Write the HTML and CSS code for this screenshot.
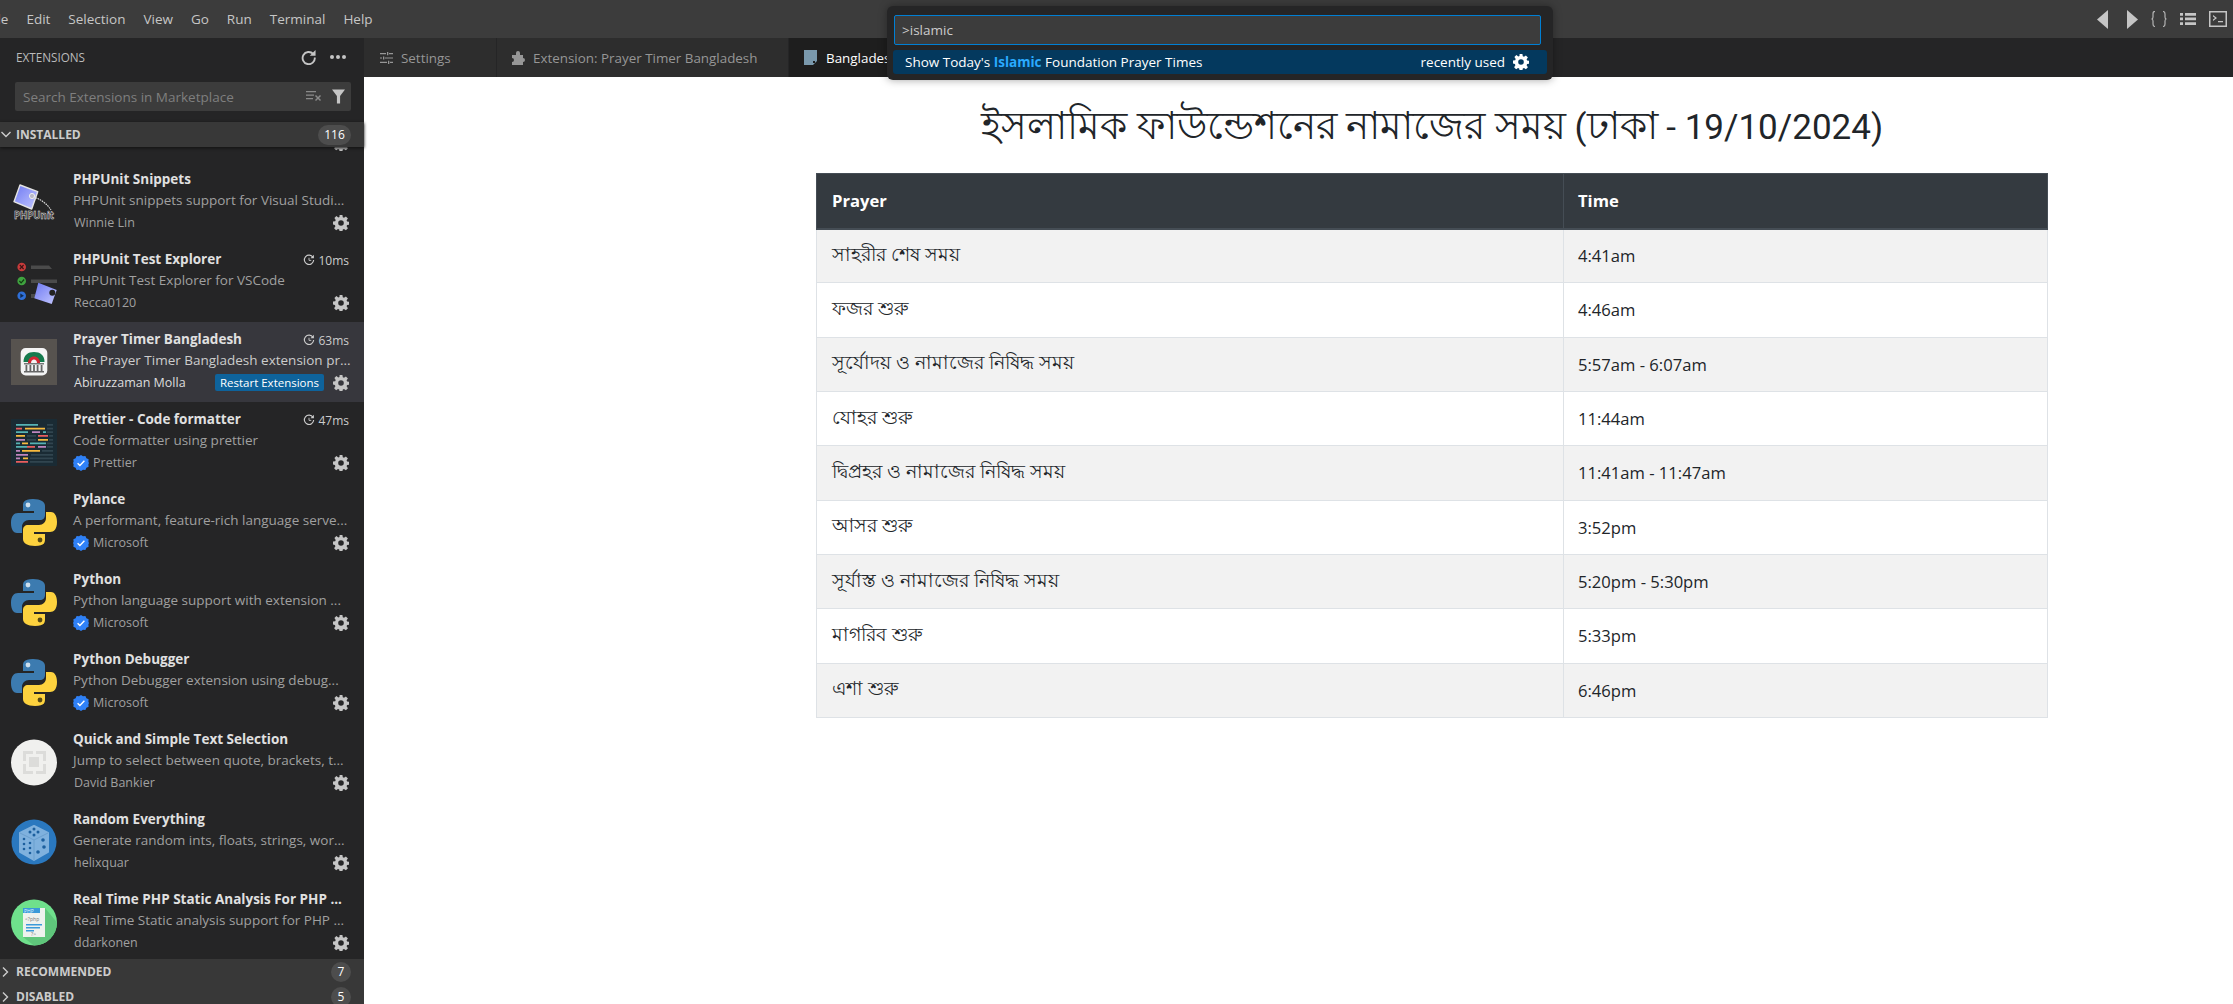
FILE: index.html
```html
<!DOCTYPE html>
<html lang="en">
<head>
    <meta charset="UTF-8">
    <title>Prayer Times</title>
    <link rel="stylesheet" href="styles.css">
</head>
<body>
    <svg class="svg-defs" width="0" height="0">
        <defs>
            <linearGradient id="tagFill" x1="0" y1="0" x2="1" y2="1">
                <stop offset="0" stop-color="#6d78f2"/>
                <stop offset="1" stop-color="#c4c8ff"/>
            </linearGradient>
            <symbol id="gear" viewBox="0 0 16 16">
                <path fill-rule="evenodd" d="M6.600 0h2.800l.4 2.200 1.200.5 1.900-1.300 2 2-1.300 1.900.5 1.200 2.200.4v2.800l-2.200.4-.5 1.200 1.300 1.900-2 2-1.900-1.300-1.200.5-.4 2.200H6.600l-.4-2.200-1.200-.5-1.900 1.300-2-2 1.300-1.900-.5-1.200L0 9.400V6.600l2.200-.4.5-1.200-1.300-1.900 2-2 1.900 1.300 1.200-.5zM8 5.200a2.800 2.800 0 1 0 0 5.600 2.800 2.800 0 0 0 0-5.600z"/>
            </symbol>
            <symbol id="badge" viewBox="0 0 16 16">
                <path fill="#2f81f7" d="M8 0l2 1.300 2.400-.2 1 2.200 2.200 1-.2 2.400L16 8l-.6 1.300.2 2.400-2.200 1-1 2.200-2.400-.2L8 16l-2-1.300-2.400.2-1-2.200-2.200-1 .2-2.400L0 8l.6-1.300-.2-2.400 2.200-1 1-2.200 2.400.2z"/>
                <path fill="none" stroke="#fff" stroke-width="1.400" d="M4.600 8.200l2.300 2.300 4.500-4.700"/>
            </symbol>
            <symbol id="clock" viewBox="0 0 16 16">
                <path fill="none" stroke="currentColor" stroke-width="1.500" d="M13.300 4.500A6.200 6.200 0 1 0 14.200 8"/>
                <path fill="currentColor" d="M14.500 1v4.500H10z"/>
                <path fill="none" stroke="currentColor" stroke-width="1.200" d="M8 5v3.500h3"/>
            </symbol>
            <symbol id="python" viewBox="0 0 46 47">
                <path fill="#3c7bb0" d="M22 0C12 0 12 4 12 7v5h11v2H7c-4 0-7 3-7 10s3 10 6 10h5v-6c0-4 3-7 7-7h11c3 0 5-2 5-5V7c0-4-4-7-12-7z"/>
                <circle cx="17" cy="6" r="2.400" fill="#cfe0ee"/>
                <path fill="#fdd23e" d="M24 47c10 0 10-4 10-7v-5H23v-2h16c4 0 7-3 7-10s-3-10-6-10h-5v6c0 4-3 7-7 7H17c-3 0-5 2-5 5v9c0 4 4 7 12 7z"/>
                <circle cx="29" cy="41" r="2.400" fill="#5a4a12"/>
            </symbol>
        </defs>
    </svg>

    <header class="titlebar">
        <nav class="menu">
            <span>File</span>
            <span>Edit</span>
            <span>Selection</span>
            <span>View</span>
            <span>Go</span>
            <span>Run</span>
            <span>Terminal</span>
            <span>Help</span>
        </nav>
        <div class="layout-icons">
            <svg class="nav-back" width="11" height="19" viewBox="0 0 11 19"><path d="M11 0v19L0 9.500z"/></svg>
            <svg class="nav-fwd" width="11" height="19" viewBox="0 0 11 19"><path d="M0 0v19l11-9.500z"/></svg>
            <svg class="braces" width="16" height="16" viewBox="0 0 16 16"><path d="M4 .5C2 .5 2 1.500 2 3v3c0 1-.5 2-1.500 2C1.500 8 2 9 2 10v3c0 1.500 0 2.500 2 2.500M12 .5c2 0 2 1 2 2.500v3c0 1 .5 2 1.500 2-1 0-1.500 1-1.500 2v3c0 1.500 0 2.500-2 2.500"/></svg>
            <svg width="16" height="12" viewBox="0 0 16 12"><path d="M0 0h3v2.700H0zM5 0h11v2.700H5zM0 4.600h3v2.700H0zM5 4.600h11v2.700H5zM0 9.300h3V12H0zM5 9.300h11V12H5z"/></svg>
            <svg width="18" height="16" viewBox="0 0 18 16"><path fill-rule="evenodd" d="M0 0h18v16H0zM1.500 1.500v13h15v-13z"/><path d="M4 4l4 3-4 3V8.500L6 7 4 5.500zM9 10h5v1.200H9z"/></svg>
        </div>
    </header>

    <div class="workbench">
        <aside class="sidebar">
            <div class="side-title">
                <span>EXTENSIONS</span>
                <div class="side-actions">
                    <svg width="15" height="15" viewBox="0 0 16 16"><path fill="none" stroke="currentColor" stroke-width="2" d="M13 4.200A6.500 6.500 0 1 0 14.700 8"/><path fill="currentColor" d="M15.500 0v6.200H9.300z"/></svg>
                    <span class="dots"><i></i><i></i><i></i></span>
                </div>
            </div>
            <div class="search">
                <span>Search Extensions in Marketplace</span>
                <svg class="clear-ico" width="17" height="12" viewBox="0 0 17 12"><path d="M0 0h10v1.300H0zM0 3.500h8v1.300H0zM0 7h7v1.300H0zM9 5l1-1 2 2 2-2 1 1-2 2 2 2-1 1-2-2-2 2-1-1 2-2z"/></svg>
                <svg class="filter-ico" width="13" height="15" viewBox="0 0 14 15"><path d="M0 0h14L8.700 7v8H5.300V7z"/></svg>
            </div>
            <div class="section open">
                <svg class="chev" width="10" height="7" viewBox="0 0 10 7"><path fill="none" stroke="currentColor" stroke-width="1.400" d="M.5 1L5 5.500 9.500 1"/></svg>
                <span class="section-name">INSTALLED</span>
                <span class="count">116</span>
            </div>

            <div class="ext-list">
                <div class="ext ext-cut">
                    <div class="ext-icon"></div>
                    <div class="ext-body">
                        <div class="ext-name"></div>
                        <div class="ext-desc"></div>
                        <div class="ext-foot"><span class="publisher"></span><svg class="gear" width="16" height="16"><use href="#gear"/></svg></div>
                    </div>
                </div>

                <div class="ext">
                    <div class="ext-icon">
                        <svg width="46" height="47" viewBox="0 0 46 47">
                            <path d="M9 6l17.700 6.700L20.700 30 3 22.700z" fill="url(#tagFill)" stroke="#e4e4e4" stroke-width="1.400" stroke-linejoin="round"/>
                            <circle cx="21" cy="17" r="2.600" fill="#b9b9c9" stroke="#eee" stroke-width="1"/>
                            <path d="M22 18c8 2 14 7 18 13" fill="none" stroke="#ddd" stroke-width="1.100" stroke-dasharray="1.600 .8"/>
                            <text x="3" y="40" class="logo-word" textLength="40" lengthAdjust="spacingAndGlyphs">PHPUnit</text>
                        </svg>
                    </div>
                    <div class="ext-body">
                        <div class="ext-name">PHPUnit Snippets</div>
                        <div class="ext-desc">PHPUnit snippets support for Visual Studi...</div>
                        <div class="ext-foot"><span class="publisher">Winnie Lin</span><svg class="gear" width="16" height="16"><use href="#gear"/></svg></div>
                    </div>
                </div>

                <div class="ext">
                    <div class="ext-icon">
                        <svg width="46" height="47" viewBox="0 0 46 47">
                            <circle cx="10.700" cy="8" r="4.300" fill="#c73b3b"/>
                            <path d="M8.800 6l3.800 4M12.600 6l-3.800 4" stroke="#3a1515" stroke-width="1.100"/>
                            <circle cx="10.700" cy="22" r="4.300" fill="#3fa33f"/>
                            <path d="M8.400 22l1.700 1.800 3-3.300" fill="none" stroke="#123c12" stroke-width="1.200"/>
                            <circle cx="10.700" cy="36.700" r="4.300" fill="#2e6fd8"/>
                            <path d="M9.300 34.500v4.400l3.600-2.200z" fill="#10294f"/>
                            <path d="M20 6.500h18l3 3.500H20zM20 20.500h26V24H20zM20 35h4v4h-4z" fill="#4b4b4b"/>
                            <path d="M27.300 23.700L45.700 31 40.700 45 23.300 39.300z" fill="url(#tagFill)"/>
                            <circle cx="41.300" cy="33.700" r="3" fill="#222"/>
                        </svg>
                    </div>
                    <div class="ext-body">
                        <div class="ext-name">PHPUnit Test Explorer<span class="timing"><svg width="12" height="12"><use href="#clock"/></svg>10ms</span></div>
                        <div class="ext-desc">PHPUnit Test Explorer for VSCode</div>
                        <div class="ext-foot"><span class="publisher">Recca0120</span><svg class="gear" width="16" height="16"><use href="#gear"/></svg></div>
                    </div>
                </div>

                <div class="ext selected">
                    <div class="ext-icon">
                        <svg width="46" height="47" viewBox="0 0 46 47">
                            <rect width="46" height="46" fill="#57534f"/>
                            <rect x="9.700" y="9" width="26.600" height="27.500" rx="5" fill="#f4f4f4"/>
                            <path d="M12.500 23c0-7 4.500-10 10.500-10s10.500 3 10.500 10z" fill="#157a4d"/>
                            <path d="M17 24c0-4 2.700-6.500 6-6.500s6 2.500 6 6.500z" fill="#d22633"/>
                            <path d="M20 24c0-2 1.400-3.500 3-3.500s3 1.500 3 3.500z" fill="#f4f4f4"/>
                            <path d="M13 24h20v1.500H13z" fill="#777"/>
                            <path d="M14.500 26h1.800v6h-1.800zM18.500 26h1.800v6h-1.800zM22.100 26h1.800v6h-1.800zM25.700 26h1.800v6h-1.800zM29.700 26h1.800v6h-1.800zM13 32h20v1.500H13z" fill="#666"/>
                        </svg>
                    </div>
                    <div class="ext-body">
                        <div class="ext-name">Prayer Timer Bangladesh<span class="timing"><svg width="12" height="12"><use href="#clock"/></svg>63ms</span></div>
                        <div class="ext-desc">The Prayer Timer Bangladesh extension pr...</div>
                        <div class="ext-foot"><span class="publisher">Abiruzzaman Molla</span><span class="restart">Restart Extensions</span><svg class="gear" width="16" height="16"><use href="#gear"/></svg></div>
                    </div>
                </div>

                <div class="ext">
                    <div class="ext-icon">
                        <svg width="46" height="47" viewBox="0 0 46 47">
                            <rect width="46" height="47" fill="#1a2b34"/>
                            <g fill="#31454f">
                                <path d="M36 5h6v1.800h-6zM36 8.700h6v1.800h-6zM36 12.300h6v1.800h-6zM16 16h9v1.800h-9zM38 16h4v1.800h-4zM16 20h9v1.800h-9zM38 20h4v1.800h-4zM36 23.500h6v1.800h-6zM36 27h6v1.800h-6zM31 31h11v1.800H31zM20 35h22v1.800H20zM19 38.500h23v1.800H19zM19 42h23v1.800H19z"/>
                            </g>
                            <path d="M5 5h22v1.800H5zM5 12.300h12v1.800H5zM32 12.300h3v1.800h-3zM5 23.500h4v1.800H5zM19 23.500h16v1.800H19zM5 27h11v1.800H5z" fill="#56b3b4"/>
                            <path d="M5 8.700h6v1.800H5zM27 16h10v1.800H27zM16 27h8v1.800h-8zM5 42h12v1.800H5z" fill="#ea5e5e"/>
                            <path d="M14 8.700h20v1.800H14zM5 16h9v1.800H5zM27 20h10v1.800H27zM11 23.500h6v1.800h-6zM11 31h18v1.800H11zM12 38.500h5v1.800h-5z" fill="#f7ba3e"/>
                            <path d="M21 12.300h8v1.800h-8zM5 20h9v1.800H5zM27 27h8v1.800h-8zM5 31h4v1.800H5zM5 35h12v1.800H5zM5 38.500h4v1.800H5z" fill="#bf85bf"/>
                        </svg>
                    </div>
                    <div class="ext-body">
                        <div class="ext-name">Prettier - Code formatter<span class="timing"><svg width="12" height="12"><use href="#clock"/></svg>47ms</span></div>
                        <div class="ext-desc">Code formatter using prettier</div>
                        <div class="ext-foot"><svg class="verified" width="16" height="16"><use href="#badge"/></svg><span class="publisher">Prettier</span><svg class="gear" width="16" height="16"><use href="#gear"/></svg></div>
                    </div>
                </div>

                <div class="ext">
                    <div class="ext-icon"><svg width="46" height="47"><use href="#python"/></svg></div>
                    <div class="ext-body">
                        <div class="ext-name">Pylance</div>
                        <div class="ext-desc">A performant, feature-rich language serve...</div>
                        <div class="ext-foot"><svg class="verified" width="16" height="16"><use href="#badge"/></svg><span class="publisher">Microsoft</span><svg class="gear" width="16" height="16"><use href="#gear"/></svg></div>
                    </div>
                </div>

                <div class="ext">
                    <div class="ext-icon"><svg width="46" height="47"><use href="#python"/></svg></div>
                    <div class="ext-body">
                        <div class="ext-name">Python</div>
                        <div class="ext-desc">Python language support with extension ...</div>
                        <div class="ext-foot"><svg class="verified" width="16" height="16"><use href="#badge"/></svg><span class="publisher">Microsoft</span><svg class="gear" width="16" height="16"><use href="#gear"/></svg></div>
                    </div>
                </div>

                <div class="ext">
                    <div class="ext-icon"><svg width="46" height="47"><use href="#python"/></svg></div>
                    <div class="ext-body">
                        <div class="ext-name">Python Debugger</div>
                        <div class="ext-desc">Python Debugger extension using debug...</div>
                        <div class="ext-foot"><svg class="verified" width="16" height="16"><use href="#badge"/></svg><span class="publisher">Microsoft</span><svg class="gear" width="16" height="16"><use href="#gear"/></svg></div>
                    </div>
                </div>

                <div class="ext">
                    <div class="ext-icon">
                        <svg width="46" height="47" viewBox="0 0 46 47">
                            <circle cx="23" cy="23.500" r="23" fill="#f0f0ee"/>
                            <path fill-rule="evenodd" d="M12 12h10v3h-7v7h-3zM25 12h10v10h-3v-7h-7zM12 25h3v7h7v3H12zM32 25h3v10H25v-3h7zM18 18h10v10H18z" fill="#dcdcda"/>
                        </svg>
                    </div>
                    <div class="ext-body">
                        <div class="ext-name">Quick and Simple Text Selection</div>
                        <div class="ext-desc">Jump to select between quote, brackets, t...</div>
                        <div class="ext-foot"><span class="publisher">David Bankier</span><svg class="gear" width="16" height="16"><use href="#gear"/></svg></div>
                    </div>
                </div>

                <div class="ext">
                    <div class="ext-icon">
                        <svg width="46" height="47" viewBox="0 0 46 47">
                            <circle cx="23" cy="23" r="22.500" fill="#2a78bf"/>
                            <path d="M9 14l14-7 14 7v19l-14 8-14-8z" fill="#7fb1de" stroke="#7fb1de" stroke-width="2" stroke-linejoin="round"/>
                            <path d="M9 14l14 7 14-7M23 21v20" fill="none" stroke="#6a9fce" stroke-width="1"/>
                            <g fill="#1c5f9e"><circle cx="23" cy="10" r="1.500"/><circle cx="19" cy="13" r="1.500"/><circle cx="27" cy="13" r="1.500"/><circle cx="23" cy="16" r="1.500"/><circle cx="13" cy="20" r="1.300"/><circle cx="13" cy="25" r="1.300"/><circle cx="13" cy="30" r="1.300"/><circle cx="19" cy="24" r="1.300"/><circle cx="19" cy="29" r="1.300"/><circle cx="19" cy="34" r="1.300"/><circle cx="32" cy="21" r="1.800"/><circle cx="27" cy="33" r="1.800"/><circle cx="33" cy="28" r="1.800"/></g>
                        </svg>
                    </div>
                    <div class="ext-body">
                        <div class="ext-name">Random Everything</div>
                        <div class="ext-desc">Generate random ints, floats, strings, wor...</div>
                        <div class="ext-foot"><span class="publisher">helixquar</span><svg class="gear" width="16" height="16"><use href="#gear"/></svg></div>
                    </div>
                </div>

                <div class="ext">
                    <div class="ext-icon">
                        <svg width="46" height="47" viewBox="0 0 46 47">
                            <circle cx="23" cy="23.500" r="23" fill="#6fe08c"/>
                            <path d="M34 9l12 14.500A23 23 0 0 1 23 46.500L12 38z" fill="#5fc67b"/>
                            <path d="M12 9h22v29H12z" fill="#eef2ee"/>
                            <path d="M12 9h17v5H12z" fill="#3a9ad9"/>
                            <text x="13" y="13.500" class="logo-small logo-light">PHP</text>
                            <text x="14" y="22" class="logo-small">&lt;?php</text>
                            <path d="M15 25h16v1.500H15zM15 28h14v1.500H15zM15 31h8v1.500h-8z" fill="#3a9ad9"/>
                            <text x="20" y="37" class="logo-small">?&gt;</text>
                        </svg>
                    </div>
                    <div class="ext-body">
                        <div class="ext-name">Real Time PHP Static Analysis For PHP ...</div>
                        <div class="ext-desc">Real Time Static analysis support for PHP ...</div>
                        <div class="ext-foot"><span class="publisher">ddarkonen</span><svg class="gear" width="16" height="16"><use href="#gear"/></svg></div>
                    </div>
                </div>
            </div>

            <div class="section">
                <svg class="chev" width="7" height="10" viewBox="0 0 7 10"><path fill="none" stroke="currentColor" stroke-width="1.400" d="M1 .5L5.500 5 1 9.500"/></svg>
                <span class="section-name">RECOMMENDED</span>
                <span class="count round">7</span>
            </div>
            <div class="section">
                <svg class="chev" width="7" height="10" viewBox="0 0 7 10"><path fill="none" stroke="currentColor" stroke-width="1.400" d="M1 .5L5.500 5 1 9.500"/></svg>
                <span class="section-name">DISABLED</span>
                <span class="count round">5</span>
            </div>
        </aside>

        <main class="editor">
            <div class="tabs">
                <div class="tab tab-settings">
                    <svg width="13" height="12" viewBox="0 0 13 12"><path d="M0 1h6v1.200H0zM9 1h4v1.200H9zM7 0h1.300v3.200H7zM0 5.400h2v1.200H0zM5 5.400h8v1.200H5zM3 4.400h1.300v3.200H3zM0 9.800h7V11H0zM10 9.800h3V11h-3zM8 8.800h1.300V12H8z"/></svg>
                    Settings
                </div>
                <div class="tab tab-ext">
                    <svg width="13" height="14" viewBox="0 0 13 14"><path d="M0 4h4V2a2 2 0 0 1 4 0v2h3v3a2 2 0 0 1 0 4v3H0v-3a2 2 0 0 0 0-4z"/></svg>
                    Extension: Prayer Timer Bangladesh
                </div>
                <div class="tab active">
                    <svg width="13" height="15" viewBox="0 0 13 15"><path fill="#7a99ad" d="M0 0h13v11l-4 4H0z"/><path fill="#1e1e1e" d="M9 11h2v2H9z"/></svg>
                    Bangladesh Prayer Times
                </div>
            </div>

            <div class="page">
                <h1 class="page-title"><span class="bn">ইসলামিক ফাউন্ডেশনের নামাজের সময়</span> (<span class="bn">ঢাকা</span> - 19/10/2024)</h1>
                <table class="times">
                    <thead>
                        <tr><th>Prayer</th><th>Time</th></tr>
                    </thead>
                    <tbody>
                        <tr><td>সাহরীর শেষ সময়</td><td>4:41am</td></tr>
                        <tr><td>ফজর শুরু</td><td>4:46am</td></tr>
                        <tr><td>সূর্যোদয় ও নামাজের নিষিদ্ধ সময়</td><td>5:57am - 6:07am</td></tr>
                        <tr><td>যোহর শুরু</td><td>11:44am</td></tr>
                        <tr><td>দ্বিপ্রহর ও নামাজের নিষিদ্ধ সময়</td><td>11:41am - 11:47am</td></tr>
                        <tr><td>আসর শুরু</td><td>3:52pm</td></tr>
                        <tr><td>সূর্যাস্ত ও নামাজের নিষিদ্ধ সময়</td><td>5:20pm - 5:30pm</td></tr>
                        <tr><td>মাগরিব শুরু</td><td>5:33pm</td></tr>
                        <tr><td>এশা শুরু</td><td>6:46pm</td></tr>
                    </tbody>
                </table>
            </div>
        </main>
    </div>

    <div class="quick-input">
        <div class="quick-field">&gt;islamic</div>
        <div class="quick-row">
            <span>Show Today's <b>Islamic</b> Foundation Prayer Times</span>
            <span class="recent">recently used</span>
            <svg class="quick-gear" width="16" height="16"><use href="#gear"/></svg>
        </div>
    </div>
</body>
</html>
```

FILE: styles.css
```css
* {
    box-sizing: border-box;
}

html, body {
    height: 100%;
}

body {
    margin: 0;
    overflow: hidden;
    background: #252526;
    color: #ccc;
    font-family: "Open Sans", "Noto Sans", sans-serif;
    font-size: 13.5px;
}

.svg-defs {
    position: absolute;
}

.titlebar {
    height: 38px;
    background: #3c3c3c;
    display: flex;
    align-items: center;
    justify-content: space-between;
    padding-right: 6px;
}

.menu {
    display: flex;
    gap: 18px;
    margin-left: -13px;
    color: #c6c6c6;
}

.layout-icons {
    display: flex;
    align-items: center;
    gap: 13px;
    fill: #c5c5c5;
}

.nav-fwd {
    margin-left: 6px;
}

.braces {
    fill: none;
    stroke: #b4b4b4;
    stroke-width: 1.200;
}

.workbench {
    display: flex;
    height: calc(100% - 38px);
}

.sidebar {
    width: 364px;
    flex: none;
    display: flex;
    flex-direction: column;
    background: #252526;
}

.side-title {
    height: 38px;
    flex: none;
    display: flex;
    align-items: center;
    justify-content: space-between;
    padding: 0 18px 0 16px;
    font-size: 11.700px;
    color: #bbb;
}

.side-actions {
    display: flex;
    align-items: center;
    gap: 14px;
    color: #c5c5c5;
}

.dots {
    display: flex;
    gap: 2px;
}

.dots i {
    width: 4px;
    height: 4px;
    border-radius: 50%;
    background: #c5c5c5;
}

.search {
    height: 29px;
    flex: none;
    margin: 6px 13px 0 15px;
    padding: 0 6px 0 8px;
    display: flex;
    align-items: center;
    background: #3c3c3c;
    border-radius: 2px;
    color: #7f7f7f;
}

.search span {
    flex: 1;
}

.clear-ico {
    fill: #8a8a8a;
    margin-right: 9px;
}

.filter-ico {
    fill: #c5c5c5;
}

.section {
    height: 25px;
    flex: none;
    background: #383838;
    display: flex;
    align-items: center;
    padding: 0 13px 0 2px;
    font-size: 12px;
    font-weight: 700;
    color: #ccc;
}

.section.open {
    margin-top: 11px;
    padding-left: 1px;
    box-shadow: 0 1px 3px #111;
    position: relative;
    z-index: 1;
}

.chev {
    flex: none;
}

.section-name {
    flex: 1;
    margin-left: 5px;
}

.section:not(.open) .section-name {
    margin-left: 7px;
}

.count {
    background: #4d4d4d;
    color: #fff;
    font-weight: 400;
    font-size: 12px;
    width: 33px;
    text-align: center;
    height: 20px;
    line-height: 20px;
    border-radius: 10px;
}

.count.round {
    width: 20px;
}

.ext-list {
    height: 812px;
    flex: none;
    overflow: hidden;
}

.ext {
    height: 80px;
    display: flex;
    align-items: center;
    padding: 0 13px 0 11px;
}

.ext-cut {
    margin-top: -65px;
}

.ext.selected {
    background: #37373d;
}

.ext-icon {
    width: 46px;
    height: 47px;
    flex: none;
    margin-right: 16px;
}

.ext-body {
    flex: 1;
    min-width: 0;
}

.ext-name {
    display: flex;
    justify-content: space-between;
    font-weight: 700;
    color: #e0e0e0;
    height: 20px;
    white-space: nowrap;
}

.timing {
    display: flex;
    align-items: center;
    gap: 3px;
    padding-right: 2px;
    font-weight: 400;
    font-size: 12px;
    color: #ccc;
}

.ext-desc {
    height: 20px;
    line-height: 20px;
    color: #a0a0a0;
    white-space: nowrap;
}

.selected .ext-desc {
    color: #ccc;
}

.ext-foot {
    height: 24px;
    display: flex;
    align-items: center;
    color: #a0a0a0;
    font-size: 12.500px;
    font-weight: 500;
    padding-top: 1px;
}

.selected .ext-foot {
    color: #ddd;
}

.publisher {
    flex: 1;
    padding-left: 1px;
}

.verified {
    margin-right: 3px;
    flex: none;
}

.gear {
    fill: #c5c5c5;
    flex: none;
    margin-right: 2px;
}

.restart {
    background: #0e639c;
    color: #fff;
    font-size: 11.500px;
    font-weight: 400;
    width: 109px;
    text-align: center;
    height: 17px;
    line-height: 17px;
    border-radius: 2px;
    margin-right: 9px;
}

.logo-word {
    font-size: 10px;
    font-weight: 700;
    fill: #222;
    stroke: #e4e4e4;
    stroke-width: .5px;
}

.logo-small {
    font-size: 5px;
    fill: #777;
}

.logo-light {
    fill: #dff0fb;
}

.editor {
    flex: 1;
    min-width: 0;
    display: flex;
    flex-direction: column;
    background: #fff;
}

.tabs {
    height: 39px;
    flex: none;
    display: flex;
    background: #252526;
}

.tab {
    display: flex;
    align-items: center;
    gap: 8px;
    background: #2d2d2d;
    color: #969696;
    border-right: 1px solid #252526;
    white-space: nowrap;
    fill: #969696;
    font-size: 13.400px;
}

.tab svg {
    flex: none;
}

.tab-settings {
    width: 133px;
    padding-left: 16px;
}

.tab-ext {
    width: 292px;
    padding-left: 15px;
}

.tab.active {
    width: 140px;
    overflow: hidden;
    background: #1e1e1e;
    color: #fff;
    gap: 9px;
    padding-left: 15px;
}

.page {
    flex: 1;
    padding-left: 452px;
    color: #212529;
}

.page-title {
    width: 1232px;
    margin: 0 0 21px;
    padding-top: 25px;
    font-family: Roboto, "Open Sans", sans-serif;
    font-size: 35px;
    line-height: 48px;
    font-weight: 400;
    text-align: center;
}

.page-title .bn {
    font-size: 39px;
}

.times {
    width: 1232px;
    border-collapse: collapse;
    font-size: 16.600px;
}

.times th, .times td {
    border: 1px solid #dee2e6;
    padding: 0 15px;
    height: 54.330px;
    text-align: left;
}

.times th:nth-child(2), .times td:nth-child(2) {
    padding-left: 14px;
}

.times th:first-child, .times td:first-child {
    width: 747px;
}

.times td:first-child {
    font-size: 18.800px;
}

.times th {
    height: 55px;
    background: #343a40;
    border-color: #454d55;
    border-bottom-width: 2px;
    color: #fff;
}

.times tbody tr:nth-child(odd) {
    background: #f2f2f2;
}

.quick-input {
    position: absolute;
    top: 6px;
    left: 887px;
    width: 666px;
    height: 74px;
    padding: 9px 6px;
    background: #252526;
    border-radius: 6px;
    box-shadow: 0 0 8px rgba(0, 0, 0, .36);
}

.quick-field {
    height: 30px;
    margin: 0 6px 5px 1px;
    padding: 0 7px;
    line-height: 28px;
    background: #3c3c3c;
    border: 1px solid #007fd4;
    border-radius: 2px;
    color: #ccc;
}

.quick-row {
    height: 24px;
    display: flex;
    align-items: center;
    padding: 0 18px 0 12px;
    background: #04395e;
    border-radius: 3px;
    color: #fff;
}

.quick-row span:first-child {
    flex: 1;
}

.quick-row b {
    color: #2aaaff;
}

.quick-gear {
    fill: #fff;
    margin-left: 8px;
}
```
